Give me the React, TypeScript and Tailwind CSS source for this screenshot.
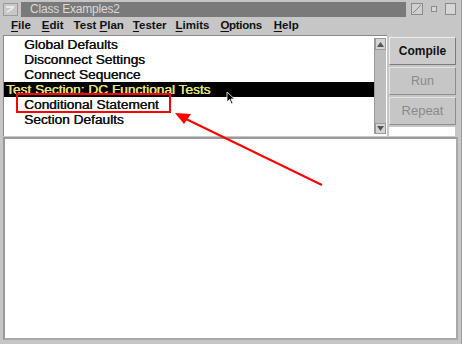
import React from "react";

const font = { fontFamily: '"Liberation Sans", Arial, sans-serif' };

function U({ children }: { children: React.ReactNode }) {
  return <span className="underline underline-offset-2">{children}</span>;
}

export default function App() {
  return (
    <div
      className="relative w-[462px] h-[344px] bg-[#c6c6c6] overflow-hidden flex flex-col border-r border-[#9a9a9a]"
      style={font}
    >
      {/* Title bar */}
      <div className="flex items-center h-[18px] pl-[3px] pr-[5px] gap-[3px]">
        <div className="w-[15px] h-[13px] border border-[#9a9a9a] bg-[#c8c8c8] flex items-center justify-center">
          <svg width="11" height="9" viewBox="0 0 11 9">
            <path d="M1 2 L9 2 M2 7 L8 3" stroke="#f2f2f2" strokeWidth="1.5" fill="none" />
          </svg>
        </div>
        <div className="flex-1 h-[15px] bg-[#7a7a7a] flex items-center pl-[9px]">
          <span className="text-[12px] text-[#d9d9d9] tracking-[-0.2px]">Class Examples2</span>
        </div>
        <div className="flex items-center gap-[8px] ml-[2px]">
          <div className="w-[12px] h-[12px] border border-[#8a8a8a] bg-[#cfcfcf] flex items-center justify-center">
            <svg width="10" height="10" viewBox="0 0 10 10">
              <path d="M1 9 L9 1" stroke="#8a8a8a" strokeWidth="1" />
            </svg>
          </div>
          <div className="w-[6px] h-[6px] border border-[#8a8a8a] bg-[#d6d6d6]" />
          <div className="w-[11px] h-[12px] border border-[#8a8a8a] bg-[#d6d6d6]" />
        </div>
      </div>

      {/* Menu bar */}
      <div className="flex items-center h-[16px] pl-[11px] text-[11.5px] font-bold text-[#111]">
        <span className="mr-[11px]"><U>F</U>ile</span>
        <span className="mr-[10px]"><U>E</U>dit</span>
        <span className="mr-[9px]">Test <U>P</U>lan</span>
        <span className="mr-[9px]"><U>T</U>ester</span>
        <span className="mr-[11px]"><U>L</U>imits</span>
        <span className="mr-[12px] tracking-[-0.3px]"><U>O</U>ptions</span>
        <span><U>H</U>elp</span>
      </div>

      {/* Upper area */}
      <div className="flex h-[101px] pl-[3px] mt-[1px]">
        <div className="flex w-[384px] border-t border-l border-[#8a8a8a] bg-white">
          <div className="flex-1 pt-[1px] text-[13.7px] leading-[15px] text-[#111] [text-shadow:0.4px_0_0_currentColor]">
            <div className="pl-[20px]">Global Defaults</div>
            <div className="pl-[20px]">Disconnect Settings</div>
            <div className="pl-[20px]">Connect Sequence</div>
            <div className="bg-black text-[#e6e67a] pl-[2px]">Test Section: DC Functional Tests</div>
            <div className="pl-[20px]">Conditional Statement</div>
            <div className="pl-[20px]">Section Defaults</div>
          </div>
          {/* Scrollbar */}
          <div className="w-[12px] my-[2px] mr-[1px] bg-[#bdbdbd] border-l border-[#9a9a9a] flex flex-col justify-between">
            <div className="h-[12px] bg-[#d4d4d4] border border-[#9a9a9a] flex items-center justify-center">
              <svg width="7" height="5" viewBox="0 0 7 5"><path d="M0 5 L3.5 0 L7 5 Z" fill="#555" /></svg>
            </div>
            <div className="h-[11px] bg-[#d4d4d4] border border-[#9a9a9a] flex items-center justify-center">
              <svg width="7" height="5" viewBox="0 0 7 5"><path d="M0 0 L3.5 5 L7 0 Z" fill="#555" /></svg>
            </div>
          </div>
        </div>
        {/* Buttons */}
        <div className="flex flex-col gap-[2px] pt-[2px] pl-[2px] w-[72px]">
          <div className="h-[28px] w-[67px] bg-[#cbcbcb] border border-t-[#ececec] border-l-[#ececec] border-r-[#7c7c7c] border-b-[#7c7c7c] flex items-center justify-center text-[12px] font-bold text-[#111]">
            Compile
          </div>
          <div className="h-[28px] w-[67px] bg-[#c6c6c6] border border-t-[#e4e4e4] border-l-[#e4e4e4] border-r-[#8c8c8c] border-b-[#8c8c8c] flex items-center justify-center text-[12.5px] text-[#8a8a8a]">
            Run
          </div>
          <div className="h-[28px] w-[67px] bg-[#c6c6c6] border border-t-[#e4e4e4] border-l-[#e4e4e4] border-r-[#8c8c8c] border-b-[#8c8c8c] flex items-center justify-center text-[13px] text-[#8a8a8a]">
            Repeat
          </div>
          <div className="flex-1 bg-white mr-[4px]" />
        </div>
      </div>

      {/* Lower panel */}
      <div className="mx-[3px] mt-[1px] h-[203px] bg-white border-2 border-t-[#9a9a9a] border-l-[#9a9a9a] border-r-[#a8a8a8] border-b-[#a8a8a8]" />

      {/* Annotation box */}
      <div className="absolute left-[16px] top-[93px] w-[155px] h-[20px] border-2 border-[#ff0000]" />

      {/* Red arrow */}
      <svg className="absolute left-0 top-0" width="462" height="344" viewBox="0 0 462 344">
        <line x1="322" y1="185" x2="184" y2="118" stroke="#ff0000" strokeWidth="2" />
        <path d="M175 113 L191 114 L184 124 Z" fill="#ff0000" />
      </svg>

      {/* Mouse cursor */}
      <svg className="absolute left-[226px] top-[91px]" width="12" height="14" viewBox="0 0 12 14">
        <path d="M1 1 L1 11 L3.5 8.5 L5.5 13 L7 12.3 L5 8 L8.5 8 Z" fill="#000" stroke="#fff" strokeWidth="0.8" />
      </svg>
    </div>
  );
}
